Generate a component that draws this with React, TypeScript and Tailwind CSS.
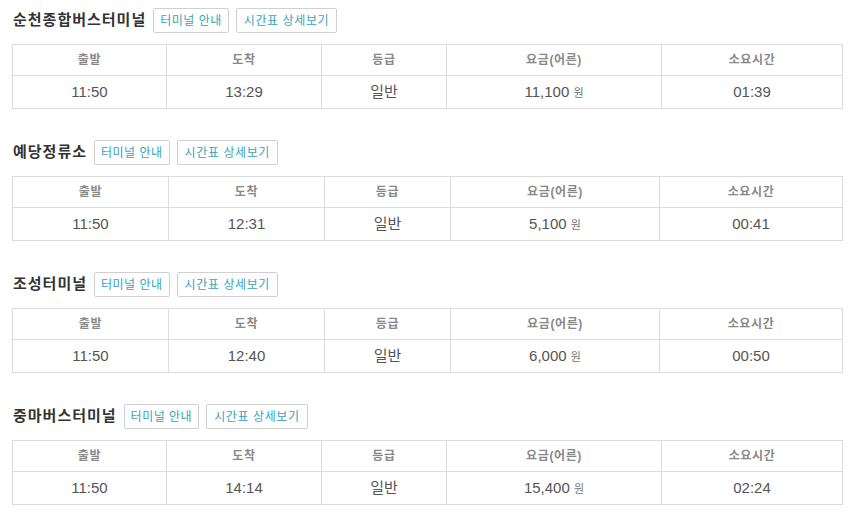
const stops = [
  { name: '순천종합버스터미널', arrive: '13:29', fare: '11,100', time: '01:39', cols: [154, 155, 125, 215, 181] },
  { name: '예당정류소', arrive: '12:31', fare: '5,100', time: '00:41', cols: [156, 156, 126, 209, 183] },
  { name: '조성터미널', arrive: '12:40', fare: '6,000', time: '00:50', cols: [156, 156, 126, 209, 183] },
  { name: '중마버스터미널', arrive: '14:14', fare: '15,400', time: '02:24', cols: [154, 155, 125, 215, 181] },
]

const heads = ['출발', '도착', '등급', '요금(어른)', '소요시간']

export default function App() {
  return (
    <div className="h-[524px] overflow-hidden bg-white pl-3 pr-[17px] pt-2 font-['Liberation_Sans','Noto_Sans_CJK_KR',sans-serif]">
      {stops.map((s) => (
        <div key={s.name} className="mb-[31px]">
          <div className="flex items-center h-[25px]">
            <h2 className="text-[15px] font-bold text-[#333] pl-px mr-[7px] tracking-[1px]">{s.name}</h2>
            <button className="h-[25px] px-[6px] border border-[#d0d0d0] rounded-[2px] text-[12px] text-[#3aa3b8] mr-[7px] tracking-[0.5px]">
              터미널 안내
            </button>
            <button className="h-[25px] px-[7px] border border-[#d0d0d0] rounded-[2px] text-[12px] text-[#3aa3b8] tracking-[0.6px]">
              시간표 상세보기
            </button>
          </div>
          <table className="mt-[11px] w-full border-collapse table-fixed">
            <colgroup>
              {s.cols.map((w, i) => (
                <col key={i} style={{ width: w }} />
              ))}
            </colgroup>
            <thead>
              <tr className="h-[31px]">
                {heads.map((h) => (
                  <th key={h} className="p-0 border border-[#dcdcdc] text-[12px] font-bold text-[#888] text-center tracking-[0.6px]">
                    {h}
                  </th>
                ))}
              </tr>
            </thead>
            <tbody>
              <tr className="h-[33px] text-[15px] text-[#555] text-center">
                <td className="p-0 border border-[#dcdcdc]">11:50</td>
                <td className="p-0 border border-[#dcdcdc]">{s.arrive}</td>
                <td className="p-0 border border-[#dcdcdc]">일반</td>
                <td className="p-0 border border-[#dcdcdc]">
                  {s.fare} <span className="text-[11px] text-[#777]">원</span>
                </td>
                <td className="p-0 border border-[#dcdcdc]">{s.time}</td>
              </tr>
            </tbody>
          </table>
        </div>
      ))}
    </div>
  )
}
